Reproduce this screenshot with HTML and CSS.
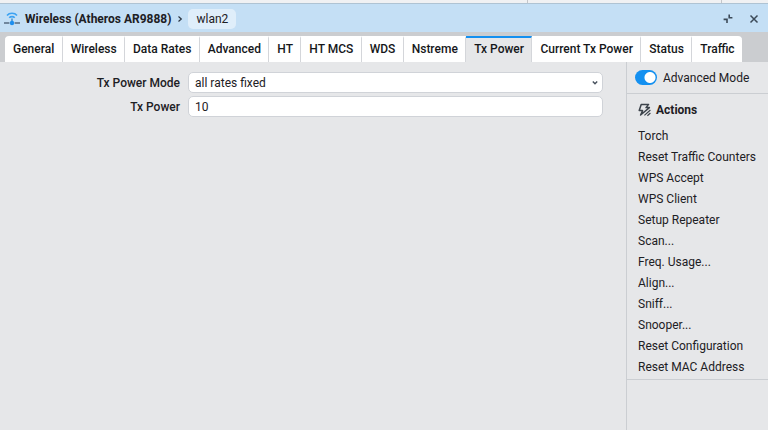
FILE: index.html
```html
<!DOCTYPE html>
<html lang="en">
<head>
  <meta charset="UTF-8">
  <meta name="viewport" content="width=device-width, initial-scale=1">
  <title>Wireless (Atheros AR9888) - wlan2</title>
  <link rel="stylesheet" href="styles.css">
</head>
<body>

<div class="backdrop">
  <span class="backdrop-col"></span>
  <span class="backdrop-col"></span>
</div>

<header class="titlebar">
  <svg class="title-icon" viewBox="0 0 16 14" width="16" height="14" fill="none" aria-hidden="true">
    <path d="M3 3.4C5.4.6 10.6.6 13 3.4M5.3 5.8c1.3-1.6 4.1-1.6 5.4 0" stroke="#3ba2f2" stroke-width="1.6"/>
    <path d="M8 6.6v3.4" stroke="#4d93cf" stroke-width="1.6"/>
    <path d="M0 11h5.4M10.6 11H16" stroke="#566b80" stroke-width="1.6"/>
    <circle cx="8" cy="11" r="2.2" fill="#1e8fef"/>
  </svg>
  <h1>Wireless (Atheros AR9888)</h1>
  <svg class="crumb-arrow" viewBox="0 0 6 8" width="6" height="8" fill="none" aria-hidden="true">
    <path d="M1.5 1.5L4.3 4L1.5 6.5" stroke="#2a3440" stroke-width="1.2"/>
  </svg>
  <span class="crumb">wlan2</span>
  <div class="window-buttons">
    <button type="button" aria-label="Restore">
      <svg viewBox="0 0 10 10" width="10" height="10" fill="none">
        <path d="M6.2 .6v3.2H9.4M.6 5.4h3.4v3.6" stroke="#3c4a58" stroke-width="1.6"/>
      </svg>
    </button>
    <button type="button" aria-label="Close">
      <svg viewBox="0 0 10 10" width="10" height="10" fill="none">
        <path d="M1.5 1.5l7 7M8.5 1.5l-7 7" stroke="#3c4a58" stroke-width="1.5"/>
      </svg>
    </button>
  </div>
</header>

<nav class="tabs">
  <a href="#general">General</a>
  <a href="#wireless">Wireless</a>
  <a href="#data-rates">Data Rates</a>
  <a href="#advanced">Advanced</a>
  <a href="#ht">HT</a>
  <a href="#ht-mcs">HT MCS</a>
  <a href="#wds">WDS</a>
  <a href="#nstreme">Nstreme</a>
  <a href="#tx-power" class="active" aria-current="page">Tx Power</a>
  <a href="#current-tx-power">Current Tx Power</a>
  <a href="#status">Status</a>
  <a href="#traffic">Traffic</a>
</nav>

<main class="content">
  <form class="settings">
    <label for="mode">Tx Power Mode</label>
    <div class="select">
      <select id="mode">
        <option>all rates fixed</option>
      </select>
      <svg viewBox="0 0 8 6" width="8" height="6" fill="none" aria-hidden="true">
        <path d="M1.8 1.6L4 3.8L6.2 1.6" stroke="#46505c" stroke-width="1.4"/>
      </svg>
    </div>

    <label for="power">Tx Power</label>
    <input type="text" id="power" value="10">
  </form>

  <aside class="sidebar">
    <label class="advanced">
      <input type="checkbox" role="switch" checked>
      Advanced Mode
    </label>
    <section class="actions">
      <h2>
        <svg viewBox="0 0 13 14" width="13" height="14" fill="none" stroke="#3d444c" stroke-linejoin="round" aria-hidden="true">
          <path d="M3.2 1.4h7.4L8 4.6h3.4L2.6 12L4.6 7.6H1.2z" stroke-width="1.5"/>
          <path d="M6.4 12.4l6-5.4M9.4 12.8l3-2.8" stroke-width="1.2"/>
        </svg>
        Actions
      </h2>
      <button type="button">Torch</button>
      <button type="button">Reset Traffic Counters</button>
      <button type="button">WPS Accept</button>
      <button type="button">WPS Client</button>
      <button type="button">Setup Repeater</button>
      <button type="button">Scan...</button>
      <button type="button">Freq. Usage...</button>
      <button type="button">Align...</button>
      <button type="button">Sniff...</button>
      <button type="button">Snooper...</button>
      <button type="button">Reset Configuration</button>
      <button type="button">Reset MAC Address</button>
    </section>
  </aside>
</main>

</body>
</html>
```
FILE: styles.css
```css
* {
  box-sizing: border-box;
}
body {
  margin: 0;
  min-height: 100vh;
  display: flex;
  flex-direction: column;
  background: #e6e7e9;
  color: #1d2024;
  font-family: Roboto, "Liberation Sans", sans-serif;
  font-size: 12px;
}
button, input, select {
  font: inherit;
  color: inherit;
}
button {
  border: none;
  padding: 0;
  background: none;
  cursor: pointer;
}

/* edge of the window underneath */
.backdrop {
  display: flex;
  justify-content: flex-end;
  height: 4px;
  padding-right: 46px;
  background: #f0f1f3;
  border-bottom: 1px solid #afc3d3;
}
.backdrop-col {
  width: 194px;
  border-left: 1px solid #c4c6ca;
}
.backdrop-col:last-child {
  width: 1px;
}

.titlebar {
  display: flex;
  align-items: center;
  height: 28px;
  padding: 1px 8px 0 4px;
  background: #c4dff5;
}
.titlebar h1 {
  margin: 0 6px 0 5px;
  font-size: 12px;
  font-weight: 700;
}
.crumb {
  margin-left: 5px;
  padding: 0 8px;
  border-radius: 5px;
  background: #dfeefa;
  line-height: 20px;
}
.window-buttons {
  display: flex;
  gap: 14px;
  margin-left: auto;
}
.window-buttons button {
  display: flex;
  padding: 1px;
}

.tabs {
  display: flex;
  height: 30px;
  padding: 4px 26px 0 5px;
  background: #cbcdd0;
}
.tabs a {
  flex: 1 0 auto;
  padding: 0 7px 0 8px;
  border-top: 2px solid #fff;
  border-right: 1px solid #d4d6da;
  background: #fff;
  color: #15171a;
  font-weight: 500;
  line-height: 22px;
  text-decoration: none;
  white-space: nowrap;
}
.tabs a:first-child {
  border-top-left-radius: 4px;
}
.tabs a:last-child {
  border-right: none;
  border-top-right-radius: 4px;
}
.tabs .active {
  border-top-color: #1490f0;
  background: #e6e7e9;
}

.content {
  flex: 1;
  display: flex;
}
.settings {
  flex: 1;
  display: grid;
  grid-template-columns: 180px 1fr;
  grid-auto-rows: 21px;
  gap: 3px 8px;
  align-content: start;
  align-items: center;
  padding: 10px 23px 0 0;
}
.settings label {
  text-align: right;
  font-weight: 500;
}
.settings input, .settings select {
  width: 100%;
  height: 21px;
  padding: 0 6px;
  border: 1px solid #d0d3d8;
  border-radius: 5px;
  background: #fff;
  appearance: none;
}
.select {
  position: relative;
}
.select svg {
  position: absolute;
  top: 8px;
  right: 4px;
  pointer-events: none;
}

.sidebar {
  width: 142px;
  border-left: 1px solid #cbced2;
}
.advanced {
  display: flex;
  align-items: center;
  gap: 6px;
  height: 32px;
  padding: 0 8px;
  border-bottom: 1px solid #cbced2;
  white-space: nowrap;
}
.advanced input {
  flex: none;
  width: 22px;
  height: 15px;
  margin: 0;
  border-radius: 8px;
  background: radial-gradient(circle at 15px 50%, #fff 5px, #1490f0 6px);
  appearance: none;
}
.actions {
  display: flex;
  flex-direction: column;
  padding: 0 0 2px 11px;
  border-bottom: 1px solid #cbced2;
}
.actions h2 {
  display: flex;
  align-items: center;
  gap: 5px;
  height: 31px;
  margin: 0;
  font-size: 12px;
  font-weight: 700;
}
.actions button {
  height: 21px;
  text-align: left;
  white-space: nowrap;
}
```
